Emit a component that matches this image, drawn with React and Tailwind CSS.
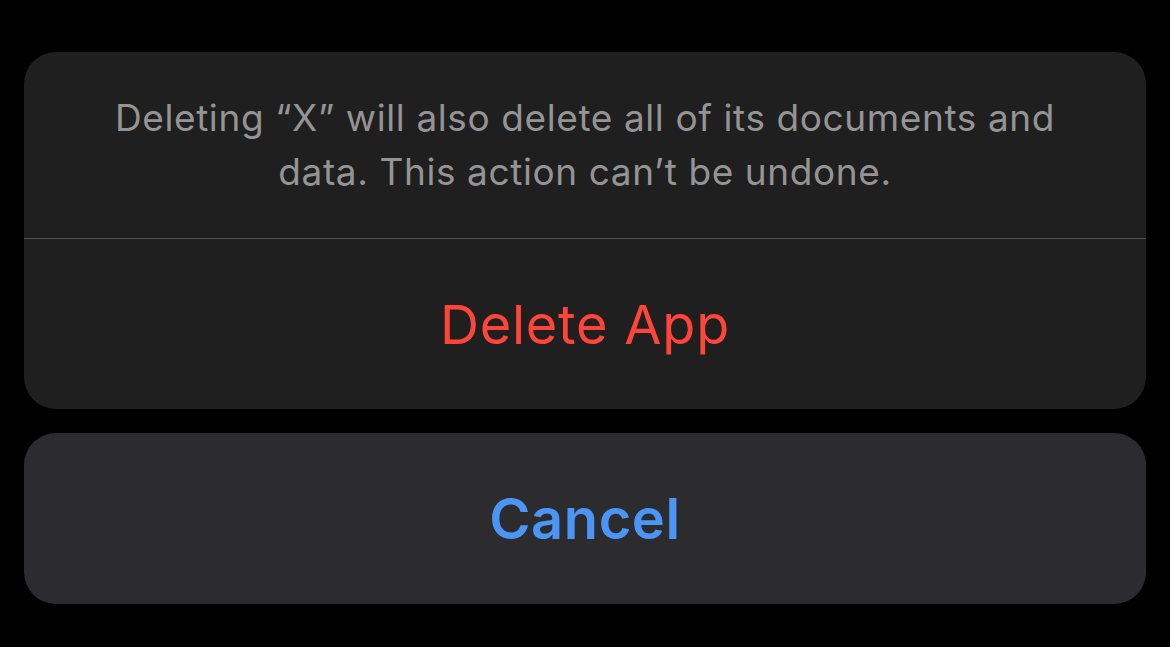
export default function App() {
  return (
    <div className="w-[1170px] h-[647px] bg-black pt-[52px] px-[24px] overflow-hidden" style={{ fontFamily: 'Inter, "Noto Sans", sans-serif' }}>
      <div className="rounded-[32px] bg-[#1f1f1f] overflow-hidden">
        <div className="h-[186px] flex items-center justify-center px-[60px]">
          <p className="text-center text-[#949494] text-[37px] leading-[54px] tracking-[0.6px]">
            Deleting “X” will also delete all of its documents and data. This action can’t be undone.
          </p>
        </div>
        <div className="h-px bg-[#545454]" />
        <div className="h-[170px] flex items-center justify-center">
          <span className="text-[#ff453a] text-[54px] tracking-[0.8px]">Delete App</span>
        </div>
      </div>
      <div className="mt-[24px] h-[171px] rounded-[32px] bg-[#2c2c2e] flex items-center justify-center">
        <span className="text-[#4b95f7] text-[56px] font-semibold tracking-[0.6px]">Cancel</span>
      </div>
    </div>
  );
}
